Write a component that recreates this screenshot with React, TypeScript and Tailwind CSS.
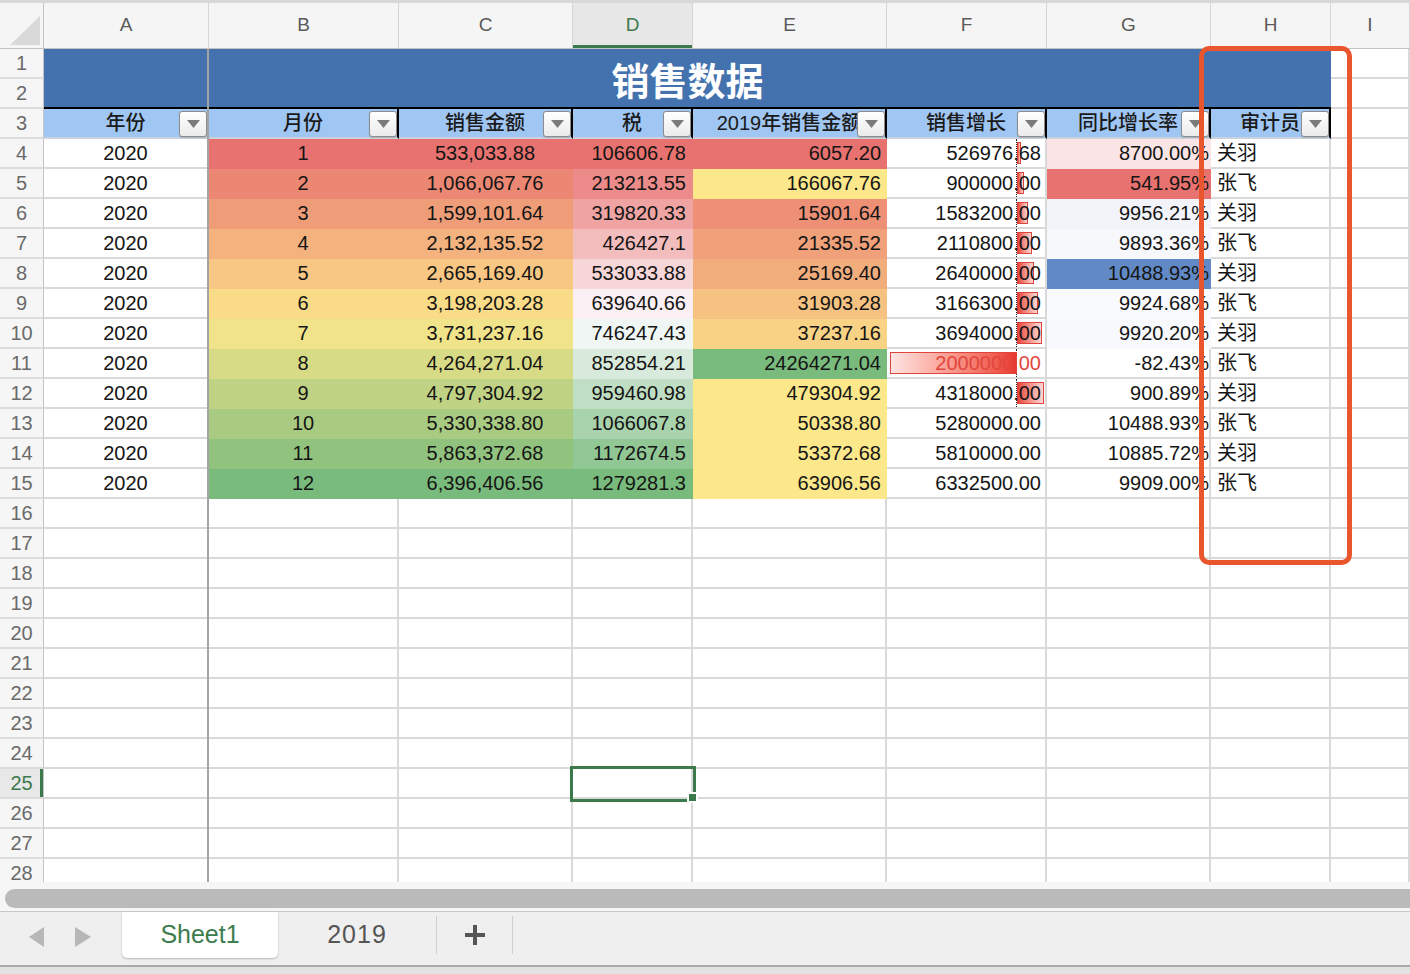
const GRID =
  "grid grid-cols-[44px_165px_190px_174px_120px_194px_160px_164px_120px_79px] auto-rows-[30px]";

const LETTERS = ["A", "B", "C", "D", "E", "F", "G", "H", "I"];
const HEADS = ["年份", "月份", "销售金额", "税", "2019年销售金额", "销售增长", "同比增长率", "审计员"];

const CELL = "flex items-center overflow-hidden whitespace-nowrap border-r-2 border-b-2 text-[20px] text-[#151515]";
const BLANK = "border-r-2 border-b-2 border-[#d9d9d9] bg-white";
const PLAIN = "bg-white border-[#d9d9d9]";

type Row = {
  m: number;
  c: string;
  d: string;
  e: string;
  f: string;
  g: string;
  h: string;
  bc: string;
  dc: string;
  ec: string;
  gc: string;
  bar: string;
};

const rows: Row[] = [
  { m: 1, c: "533,033.88", d: "106606.78", e: "6057.20", f: "526976.68", g: "8700.00%", h: "关羽",
    bc: "bg-[#e8726f] border-[#e8726f]", dc: "bg-[#e8726f] border-[#e8726f]", ec: "bg-[#e8726f] border-[#e8726f]", gc: "bg-[#fbe4e5] border-[#fbe4e5]", bar: "w-[4px]" },
  { m: 2, c: "1,066,067.76", d: "213213.55", e: "166067.76", f: "900000.00", g: "541.95%", h: "张飞",
    bc: "bg-[#ec8774] border-[#ec8774]", dc: "bg-[#ec8b89] border-[#ec8b89]", ec: "bg-[#fce88b] border-[#fce88b]", gc: "bg-[#e8726f] border-[#e8726f]", bar: "w-[7px]" },
  { m: 3, c: "1,599,101.64", d: "319820.33", e: "15901.64", f: "1583200.00", g: "9956.21%", h: "关羽",
    bc: "bg-[#ef9d79] border-[#ef9d79]", dc: "bg-[#efa4a3] border-[#efa4a3]", ec: "bg-[#ed9076] border-[#ed9076]", gc: "bg-[#f2f4fa] border-[#f2f4fa]", bar: "w-[11px]" },
  { m: 4, c: "2,132,135.52", d: "426427.1", e: "21335.52", f: "2110800.00", g: "9893.36%", h: "张飞",
    bc: "bg-[#f3b27e] border-[#f3b27e]", dc: "bg-[#f3bdbd] border-[#f3bdbd]", ec: "bg-[#f0a17a] border-[#f0a17a]", gc: "bg-[#f7f8fc] border-[#f7f8fc]", bar: "w-[15px]" },
  { m: 5, c: "2,665,169.40", d: "533033.88", e: "25169.40", f: "2640000.00", g: "10488.93%", h: "关羽",
    bc: "bg-[#f7c783] border-[#f7c783]", dc: "bg-[#f7d6d8] border-[#f7d6d8]", ec: "bg-[#f2ad7d] border-[#f2ad7d]", gc: "bg-[#6089c5] border-[#6089c5]", bar: "w-[17px]" },
  { m: 6, c: "3,198,203.28", d: "639640.66", e: "31903.28", f: "3166300.00", g: "9924.68%", h: "张飞",
    bc: "bg-[#fadc88] border-[#fadc88]", dc: "bg-[#faeff2] border-[#faeff2]", ec: "bg-[#f6c281] border-[#f6c281]", gc: "bg-[#f9fafd] border-[#f9fafd]", bar: "w-[21px]" },
  { m: 7, c: "3,731,237.16", d: "746247.43", e: "37237.16", f: "3694000.00", g: "9920.20%", h: "关羽",
    bc: "bg-[#f0e389] border-[#f0e389]", dc: "bg-[#f0f6f3] border-[#f0f6f3]", ec: "bg-[#f9d385] border-[#f9d385]", gc: "bg-[#f8f9fd] border-[#f8f9fd]", bar: "w-[25px]" },
  { m: 8, c: "4,264,271.04", d: "852854.21", e: "24264271.04", f: "2000000.00", g: "-82.43%", h: "张飞",
    bc: "bg-[#d8db86] border-[#d8db86]", dc: "bg-[#d8eadb] border-[#d8eadb]", ec: "bg-[#79bb7c] border-[#79bb7c]", gc: PLAIN, bar: "neg" },
  { m: 9, c: "4,797,304.92", d: "959460.98", e: "479304.92", f: "4318000.00", g: "900.89%", h: "关羽",
    bc: "bg-[#c0d384] border-[#c0d384]", dc: "bg-[#c0dec3] border-[#c0dec3]", ec: "bg-[#fce88b] border-[#fce88b]", gc: PLAIN, bar: "w-[27px]" },
  { m: 10, c: "5,330,338.80", d: "1066067.8", e: "50338.80", f: "5280000.00", g: "10488.93%", h: "张飞",
    bc: "bg-[#a9cb81] border-[#a9cb81]", dc: "bg-[#a9d3ac] border-[#a9d3ac]", ec: "bg-[#fce88b] border-[#fce88b]", gc: PLAIN, bar: "" },
  { m: 11, c: "5,863,372.68", d: "1172674.5", e: "53372.68", f: "5810000.00", g: "10885.72%", h: "关羽",
    bc: "bg-[#91c37f] border-[#91c37f]", dc: "bg-[#91c794] border-[#91c794]", ec: "bg-[#fce88b] border-[#fce88b]", gc: PLAIN, bar: "" },
  { m: 12, c: "6,396,406.56", d: "1279281.3", e: "63906.56", f: "6332500.00", g: "9909.00%", h: "张飞",
    bc: "bg-[#79bb7c] border-[#79bb7c]", dc: "bg-[#79bb7c] border-[#79bb7c]", ec: "bg-[#fce88b] border-[#fce88b]", gc: PLAIN, bar: "" },
];

function RowHead({ n }: { n: number }) {
  if (n === 25) {
    return (
      <div className="relative flex items-center justify-center border-r border-b-2 border-r-[#c4c4c4] border-b-[#dcdcdc] bg-[#e8e8e8] text-[20px] text-[#3c7a4c]">
        {n}
        <span className="absolute right-0 top-0 h-full w-[3px] bg-[#3c7a4c]" />
      </div>
    );
  }
  return (
    <div className="flex items-center justify-center border-r border-b-2 border-r-[#c4c4c4] border-b-[#dcdcdc] bg-[#f6f6f6] text-[20px] text-[#6a6a6a]">
      {n}
    </div>
  );
}

function FilterButton() {
  return (
    <span className="absolute right-0 top-[2px] flex h-[26px] w-[28px] items-center justify-center rounded-[3px] border border-[#8c8c8c] bg-linear-to-b from-white to-[#ebebeb] shadow-[0_1px_1px_rgba(0,0,0,0.15)]">
      <svg width="13" height="8" viewBox="0 0 13 8">
        <path d="M0 0h13L6.5 8z" fill="#7b7b7b" />
      </svg>
    </span>
  );
}

function ColumnHeader() {
  return (
    <div className={"grid h-[46px] grid-cols-[44px_165px_190px_174px_120px_194px_160px_164px_120px_79px] border-b border-[#c4c4c4] bg-[#f5f5f5]"}>
      <div className="relative border-r border-[#c4c4c4]">
        <svg className="absolute left-[10px] top-[13px]" width="30" height="29" viewBox="0 0 30 29">
          <path d="M30 0v29H0z" fill="#d9d9d9" />
        </svg>
      </div>
      {LETTERS.map((l) =>
        l === "D" ? (
          <div key={l} className="relative flex items-center justify-center border-r border-[#d6d6d6] bg-[#e7e7e7] text-[19px] text-[#3c7a4c]">
            {l}
            <span className="absolute bottom-0 left-0 h-[3px] w-full bg-[#3c7a4c]" />
          </div>
        ) : (
          <div key={l} className="flex items-center justify-center border-r border-[#d6d6d6] text-[19px] text-[#5a5a5a]">
            {l}
          </div>
        )
      )}
    </div>
  );
}

function DataRow({ r, n }: { r: Row; n: number }) {
  const neg = r.bar === "neg";
  return (
    <>
      <RowHead n={n} />
      <div className={`${CELL} ${PLAIN} justify-center`}>2020</div>
      <div className={`${CELL} ${r.bc} justify-center`}>{r.m}</div>
      <div className={`${CELL} ${r.bc} justify-center`}>{r.c}</div>
      <div className={`${CELL} ${r.dc} justify-end pr-[5px]`}>{r.d}</div>
      <div className={`${CELL} ${r.ec} justify-end pr-[4px]`}>{r.e}</div>
      <div className={`${CELL} ${PLAIN} relative justify-end pr-[4px]`}>
        {n <= 12 && <span className="absolute left-[129px] top-0 h-[30px] border-l border-dotted border-[#222]" />}
        {neg && (
          <span className="absolute left-[3px] top-[3px] h-[22px] w-[127px] border border-[#e0453d] bg-linear-to-r from-[#fbe4e3] to-[#e8372e]" />
        )}
        {!neg && r.bar && (
          <span className={`absolute left-[130px] top-[3px] h-[22px] border border-[#e0453d] bg-linear-to-r from-[#e6423b] to-[#f8d9d8] ${r.bar}`} />
        )}
        <span className={neg ? "relative text-[#e2463d]" : "relative"}>{r.f}</span>
      </div>
      <div className={`${CELL} ${r.gc} justify-end`}>{r.g}</div>
      <div className={`${CELL} ${PLAIN} justify-start pl-[6px]`}>{r.h}</div>
      <div className={BLANK} />
    </>
  );
}

function EmptyRow({ n }: { n: number }) {
  return (
    <>
      <RowHead n={n} />
      {LETTERS.map((l) =>
        n === 25 && l === "D" ? (
          <div key={l} className={`${BLANK} relative`}>
            <span className="absolute -left-[3px] -top-[3px] h-[36px] w-[126px] border-[3px] border-[#3c7a4c]" />
            <span className="absolute left-[114px] top-[23px] h-[11px] w-[11px] border-2 border-white bg-[#3c7a4c]" />
          </div>
        ) : (
          <div key={l} className={BLANK} />
        )
      )}
    </>
  );
}

export default function App() {
  const empties = Array.from({ length: 13 }, (_, i) => i + 16);
  return (
    <div className="relative h-[974px] w-[1410px] overflow-hidden bg-white font-['Liberation_Sans','Noto_Sans_CJK_SC',sans-serif]">
      <div className="h-[3px] bg-[#d8d8d8]" />
      <ColumnHeader />

      <div className="relative h-[833px] overflow-hidden">
        <div className={GRID}>
          <RowHead n={1} />
          <div className="col-span-8 row-span-2 flex items-center justify-center border-b-2 border-black bg-[#4372ae] font-['Noto_Sans_CJK_SC',sans-serif] text-[38px] font-bold text-white">
            销售数据
          </div>
          <div className={BLANK} />
          <RowHead n={2} />
          <div className={BLANK} />

          <RowHead n={3} />
          {HEADS.map((h, i) => (
            <div
              key={h}
              className={`relative flex items-center border-b-2 border-r-2 border-b-[#c9d2dd] bg-[#a0c6f3] text-[20px] font-medium text-[#1a1a1a] ${i === 0 ? "border-r-[#a3a3a3]" : "border-r-black"}`}
            >
              <span className="w-full text-center whitespace-nowrap">{h}</span>
              <FilterButton />
            </div>
          ))}
          <div className={BLANK} />

          {rows.map((r, i) => (
            <DataRow key={r.m} r={r} n={i + 4} />
          ))}

          {empties.map((n) => (
            <EmptyRow key={n} n={n} />
          ))}
        </div>
        <div className="absolute left-[207px] top-0 h-full w-[2px] bg-[#a3a3a3]" />
      </div>

      <div className="h-[29px] bg-[#f6f6f6] pl-[5px] pt-[7px]">
        <div className="h-[19px] rounded-l-full bg-[#bababa]" />
      </div>

      <div className="flex h-[54px] border-t border-[#c8c8c8] bg-[#efefef]">
        <div className="flex w-[122px] items-center gap-[31px] pb-[4px] pl-[29px]">
          <svg width="15" height="20" viewBox="0 0 15 20">
            <path d="M15 0v20L0 10z" fill="#b7b7b7" />
          </svg>
          <svg width="16" height="20" viewBox="0 0 16 20">
            <path d="M0 0v20l16-10z" fill="#b7b7b7" />
          </svg>
        </div>
        <div className="flex h-[46px] w-[156px] items-center justify-center rounded-b-[5px] bg-white text-[25px] text-[#3d7c4d] shadow-[0_1px_2px_rgba(0,0,0,0.25)]">
          Sheet1
        </div>
        <div className="mt-[4px] flex h-[38px] w-[159px] items-center justify-center border-r border-[#cfcfcf] text-[25px] tracking-[1px] text-[#555]">
          2019
        </div>
        <div className="mt-[4px] flex h-[38px] w-[76px] items-center justify-center border-r border-[#cfcfcf]">
          <svg width="20" height="20" viewBox="0 0 20 20">
            <path d="M8 0h4v8h8v4h-8v8H8v-8H0V8h8z" fill="#555" />
          </svg>
        </div>
      </div>

      <div className="h-[9px] border-t-2 border-[#a9a9a9] bg-[#e2e2e2]" />

      <div className="absolute left-[1199px] top-[46px] h-[519px] w-[153px] rounded-[10px] border-[5px] border-[#e9552d]" />
    </div>
  );
}
